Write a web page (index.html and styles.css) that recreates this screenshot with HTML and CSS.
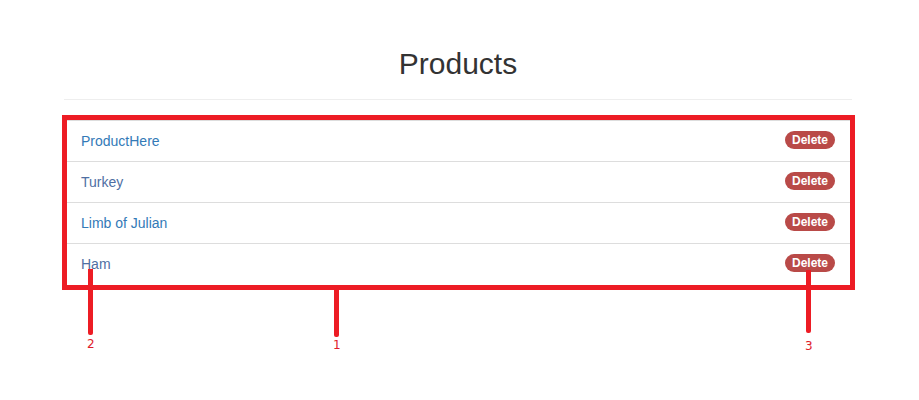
FILE: index.html
```html
<!DOCTYPE html>
<html>
<head>
<meta charset="utf-8">
<title>Products</title>
<link rel="stylesheet" href="styles.css">
</head>
<body>
<div class="container">
  <div class="page-header">
    <h2 class="title">Products</h2>
  </div>
  <ul class="list-group">
    <li class="list-group-item"><a href="#" class="item-link">ProductHere</a><span class="badge">Delete</span></li>
    <li class="list-group-item"><a href="#" class="item-link visited">Turkey</a><span class="badge">Delete</span></li>
    <li class="list-group-item"><a href="#" class="item-link">Limb of Julian</a><span class="badge">Delete</span></li>
    <li class="list-group-item"><a href="#" class="item-link visited">Ham</a><span class="badge">Delete</span></li>
  </ul>
</div>
<div class="annot-box"></div>
<div class="annot-line line-1"></div>
<div class="annot-line line-2"></div>
<div class="annot-line line-3"></div>
<span class="annot-label label-1">1</span>
<span class="annot-label label-2">2</span>
<span class="annot-label label-3">3</span>
</body>
</html>
```
FILE: styles.css
```css
* { box-sizing: border-box; }
html, body {
  margin: 0;
  padding: 0;
  background: #fff;
  font-family: "Liberation Sans", Arial, sans-serif;
  font-size: 14px;
  line-height: 20px;
  color: #333;
}
.container {
  width: 788px;
  margin: 0 0 0 64px;
  padding-top: 47px;
}
.page-header {
  padding-bottom: 9px;
  border-bottom: 1px solid #eee;
  margin-bottom: 20px;
}
.title {
  margin: 0 0 10px;
  font-size: 30px;
  font-weight: 500;
  line-height: 33px;
  text-align: center;
  color: #333;
}
.list-group {
  list-style: none;
  margin: 0;
  padding: 0;
  width: 787px;
}
.list-group-item {
  display: flex;
  justify-content: space-between;
  align-items: center;
  padding: 10px 15px 10px 16px;
  border: 1px solid #ddd;
  margin-bottom: -1px;
  height: 42px;
}
.item-link {
  color: #337ab7;
  text-decoration: none;
}
.item-link.visited {
  color: #4f6fa3;
}
.badge {
  display: inline-block;
  padding: 3px 7px;
  font-size: 12px;
  font-weight: bold;
  line-height: 12px;
  color: #fff;
  background: #b94a48;
  border-radius: 10px;
  margin-top: -2px;
}
.annot-box {
  position: absolute;
  left: 62px;
  top: 115px;
  width: 793px;
  height: 175px;
  border: 5px solid #ed1c24;
}
.annot-line {
  position: absolute;
  width: 5px;
  background: #ed1c24;
  border-radius: 0 0 2px 2px;
}
.line-1 { left: 334px; top: 288px; height: 49px; }
.line-2 { left: 88px; top: 269px; height: 66px; }
.line-3 { left: 806px; top: 270px; height: 63px; }
.annot-label {
  position: absolute;
  font-family: "DejaVu Sans", "Liberation Sans", sans-serif;
  font-size: 12px;
  line-height: 14px;
  color: #e0202a;
}
.label-1 { left: 333px; top: 338px; }
.label-2 { left: 87px; top: 337px; }
.label-3 { left: 805px; top: 339px; }
```
